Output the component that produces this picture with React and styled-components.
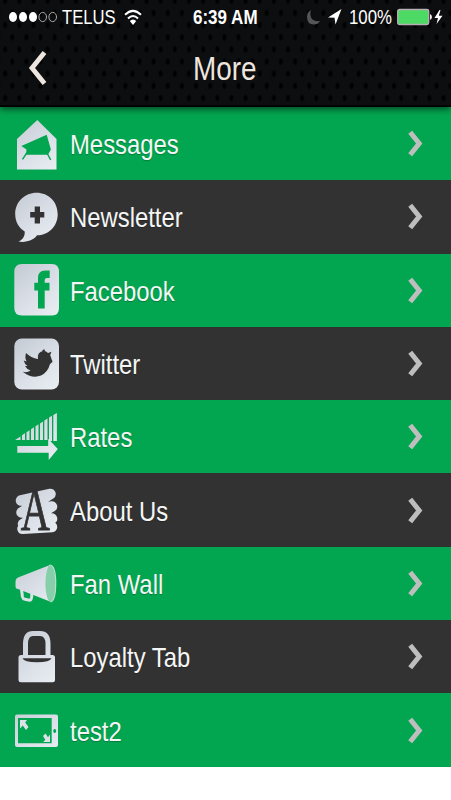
import styled, { createGlobalStyle } from 'styled-components';

const GlobalStyle = createGlobalStyle`
    * {
        box-sizing: border-box;
    }

    body {
        margin: 0;
        background: #fff;
        font-family: "Liberation Sans", Arial, sans-serif;
    }
`;

const Screen = styled.div`
    width: 451px;
    height: 800px;
    overflow: hidden;
    background: #fff;
`;

const Header = styled.header`
    position: relative;
    height: 107px;
    border-bottom: 2px solid #020202;
    box-shadow: 0 2px 7px rgba(0, 0, 0, 0.6);
    background-color: #0d0e0f;
    background-image: radial-gradient(
            ellipse 2.7px 4.2px at 50% 50%,
            #010101 45%,
            transparent
        ),
        radial-gradient(ellipse 2.7px 4.2px at 50% 50%, #010101 45%, transparent);
    background-size: 14.15px 24.3px;
    background-position: 5.2px 0.8px, -1.9px 12.95px;
`;

const StatusBar = styled.div`
    display: grid;
    grid-template-columns: 1fr auto 1fr;
    align-items: center;
    height: 34px;
    padding: 0 8px 0 9px;
    color: #fff;
`;

const Side = styled.div`
    display: flex;
    align-items: center;
    justify-content: ${(props) => (props.$end ? 'flex-end' : 'flex-start')};
`;

const Squeezed = styled.span`
    display: block;
    width: ${(props) => props.$width}px;
    margin-left: ${(props) => props.$gap || 0}px;
    font-size: ${(props) => props.$size}px;
    font-weight: ${(props) => (props.$bold ? 700 : 400)};
    line-height: 1.2;
    white-space: nowrap;
    transform: scaleX(${(props) => props.$scale});
    transform-origin: left center;
`;

const Glyph = styled.svg`
    display: block;
    flex: none;
    margin-left: ${(props) => props.$gap || 0}px;
`;

const NavBar = styled.div`
    display: grid;
    grid-template-columns: 193px auto 1fr;
    align-items: center;
    height: 68px;
    color: #eee5df;
`;

const BackButton = styled.button`
    width: 60px;
    padding: 0 0 0 27px;
    border: none;
    background: none;
`;

const List = styled.ul`
    margin: 0;
    padding: 0;
    list-style: none;
`;

const Row = styled.li`
    display: flex;
    align-items: center;
    height: 73.3px;
    padding: 0 28px 0 12px;
    color: #f4f6f5;
    background: ${(props) => (props.$green ? '#03a650' : '#333233')};
`;

const IconBox = styled.svg`
    display: block;
    flex: none;
    width: 50px;
    height: 60px;
    overflow: visible;
`;

const Label = styled.span`
    flex: 1;
    margin-left: 8.3px;
    padding-top: 3px;
    font-size: 28px;
    line-height: 34px;
    white-space: nowrap;
    text-shadow: 0 1px 1px rgba(0, 0, 0, 0.25);
    transform: scaleX(0.852);
    transform-origin: left center;
`;

const SILVER = 'url(#silver)';

const Messages = () => (
    <>
        <path fill={SILVER} d="M25.3 6 L44.5 25 V55.5 H5 V25 Z" />
        <path
            fill="#03a650"
            d="M9.3 32 L34.7 20.7 L38.9 35.5 L36 40.7 H14 L14.5 35.5 Z"
        />
        <path
            fill="none"
            stroke="#03a650"
            strokeWidth="1.4"
            d="M15 38.5 L10.5 45.3 M35 39 L38.7 45.8"
        />
    </>
);

const Newsletter = () => (
    <path
        fill={SILVER}
        fillRule="evenodd"
        d="M24.5 5.7 C36.5 5.7 45.7 14.5 45.7 27 C45.7 40 36 48.3 25 48.3 C22 53 14 56 6.5 54.5 C11 52.5 13 49 12.7 44.5 C7 41 3.2 35 3.2 27 C3.2 14.5 13 5.7 24.5 5.7 Z M22.7 19.5 V25 H18.2 V30.5 H22.7 V36.5 H28 V30.5 H32.3 V25 H28 V19.5 Z"
    />
);

const Facebook = () => (
    <path
        fill={SILVER}
        fillRule="evenodd"
        d="M10 4 H40 Q47 4 47 12 V48 Q47 55.5 40 55.5 H10 Q2.3 55.5 2.3 48 V12 Q2.3 4 10 4 Z M37.7 10.5 H33 Q26 10.5 26 18 V22.7 H22.3 V30.5 H26 V48.5 H32.7 V30.5 H37.5 V22.7 H32.7 V20 Q32.7 18 35 18 H37.7 Z"
    />
);

const Twitter = () => (
    <>
        <rect x="2.3" y="4.5" width="44.7" height="51" rx="7.5" fill={SILVER} />
        <path
            fill="#333233"
            d="M14 19 Q19 24 26 25 Q25 18 31 17 Q34 16.5 36 19 L39.5 17.7 L38.2 21 L40.5 28 Q38.5 29 37.8 30.5 Q36 38 29 41.5 Q20 45 10.7 37.7 Q15 39 18.5 36.5 Q14.5 35 13 32 H15.5 Q12.5 30 11.7 26.5 L14.7 27.5 Q12.5 24 14 19 Z M30 17 Q33 13 33 18 Z M37 25 L40.5 26 L37.5 29 Z"
        />
    </>
);

const Rates = () => (
    <g fill={SILVER}>
        <path d="M3 33 L8.5 29.5 V33 Z M10 28.3 L13 26 V33 H10 Z M14.5 25.3 L17.5 23.3 V33 H14.5 Z M19 22.3 L22 20.3 V33 H19 Z M23.5 19.3 L26.5 17.3 V33 H23.5 Z M28 16.5 L31 14.5 V33 H28 Z M32.3 13.5 L35.5 11.5 V33 H32.3 Z M37 10.5 L40 8.7 V34 H37 Z M41.3 8 L44.9 6 V34 H41.3 Z" />
        <path d="M5.3 39 H36.2 V31.8 L45.8 42 L36.7 53 V45.7 H5.3 Z" />
    </g>
);

const AboutUs = () => (
    <>
        <path
            fill="none"
            stroke={SILVER}
            strokeWidth="10.5"
            strokeLinecap="round"
            strokeLinejoin="round"
            d="M9 20.5 L38.5 14 L9.5 32.5 L40 26.5 L11 44 L40 38.5 L10.5 48.8 L40 47"
        />
        <text
            x="0"
            y="49.5"
            fill="#333233"
            stroke="#333233"
            strokeWidth="0.9"
            fontFamily="Liberation Serif"
            fontSize="61"
            textAnchor="middle"
            transform="translate(23.3 0) scale(.66 1)"
        >
            A
        </text>
    </>
);

const FanWall = () => (
    <>
        <path
            fill={SILVER}
            d="M38 12 L6 24.5 Q3.5 25.5 3.5 29 V33 Q3.5 36 6 36 L38 48.5 Z"
        />
        <ellipse cx="38.7" cy="30.5" rx="5.3" ry="18.5" fill="#86cfaa" />
        <path
            fill="none"
            stroke="#b9dfcb"
            strokeWidth="1.2"
            d="M37.5 12 Q43.7 12 43.7 30 Q43.7 48 38.5 49"
        />
        <path
            fill="none"
            stroke="#dce2e8"
            strokeWidth="3"
            d="M9.5 36.5 L10.5 44 Q11 46 13 46.3 L17.5 47.3 Q20 47 19.8 41"
        />
    </>
);

const Loyalty = () => (
    <>
        <path
            fill="none"
            stroke={SILVER}
            strokeWidth="5"
            d="M13.5 29 V17 Q13.5 6.5 21 6.5 H28 Q36 6.5 36 17 V29"
        />
        <rect x="6.5" y="28" width="36.5" height="27.3" rx="2.5" fill={SILVER} />
        <path
            fill="#333233"
            d="M10.5 31.3 H39.5 Q38 35.3 25 35.3 Q12 35.3 10.5 31.3 Z"
        />
    </>
);

const Tablet = () => (
    <>
        <path
            fill={SILVER}
            fillRule="evenodd"
            d="M5 14.5 H44 Q46 14.5 46 16.5 V45 Q46 47 44 47 H5 Q3 47 3 45 V16.5 Q3 14.5 5 14.5 Z M6 18 V43.3 H39.7 V18 Z M42.7 29 A1.5 2 0 1 0 42.71 29 Z"
        />
        <path
            fill="#dce2e8"
            d="M8 20 H15 L13.2 22.6 L16.5 27 L14 30 L10.8 25.6 L8 28.5 Z M38 42 H31.2 L33.3 39.7 L31 36 L33.5 33.5 L36 37.2 L38 34.5 Z"
        />
    </>
);

const Chevron = () => (
    <Glyph width="15" height="27" viewBox="0 0 15 27">
        <path
            d="M2.2 2.2 L11.2 13.5 L2.2 24.8"
            fill="none"
            stroke="#bebebe"
            strokeWidth="5"
        />
    </Glyph>
);

const items = [
    { label: 'Messages', Icon: Messages },
    { label: 'Newsletter', Icon: Newsletter },
    { label: 'Facebook', Icon: Facebook },
    { label: 'Twitter', Icon: Twitter },
    { label: 'Rates', Icon: Rates },
    { label: 'About Us', Icon: AboutUs },
    { label: 'Fan Wall', Icon: FanWall },
    { label: 'Loyalty Tab', Icon: Loyalty },
    { label: 'test2', Icon: Tablet },
];

const App = () => {
    return (
        <Screen>
            <GlobalStyle />
            <Header>
                <StatusBar>
                    <Side>
                        <Glyph width="49" height="12" viewBox="0 0 49 12">
                            <g fill="#fff">
                                <ellipse cx="4" cy="6" rx="4" ry="5" />
                                <ellipse cx="14" cy="6" rx="4" ry="5" />
                                <ellipse cx="24" cy="6" rx="4" ry="5" />
                            </g>
                            <g fill="none" stroke="#aaa">
                                <ellipse cx="33.7" cy="6" rx="3.8" ry="4.6" />
                                <ellipse cx="43.7" cy="6" rx="3.8" ry="4.6" />
                            </g>
                        </Glyph>
                        <Squeezed $size={20} $scale={0.83} $width={54} $gap={4}>
                            TELUS
                        </Squeezed>
                        <Glyph width="18" height="17" viewBox="0 0 18 17" $gap={8}>
                            <g fill="none" stroke="#fff" strokeWidth="2">
                                <path d="M1 5.8 Q9 -2 17 5.8" />
                                <path d="M4 9.5 Q9 4.5 14 9.5" />
                            </g>
                            <path
                                d="M5.8 12 Q9 9 12.2 12 L9 16 Z"
                                fill="#fff"
                            />
                        </Glyph>
                    </Side>
                    <Squeezed $size={20} $scale={0.85} $width={66} $bold>
                        6:39 AM
                    </Squeezed>
                    <Side $end>
                        <Glyph width="15" height="17" viewBox="0 0 15 17">
                            <path
                                d="M5 1 Q1 3 1 8 Q1 15.5 8 15.5 Q12 15.5 14 12 Q5 13 4.5 6 Q4.3 3 5 1 Z"
                                fill="#555"
                            />
                        </Glyph>
                        <Glyph width="14" height="16" viewBox="0 0 14 16" $gap={7}>
                            <path d="M0 8.5 L13.5 0 L7.5 15.5 L6.5 8.8 Z" fill="#fff" />
                        </Glyph>
                        <Squeezed $size={20} $scale={0.84} $width={43} $gap={7}>
                            100%
                        </Squeezed>
                        <Glyph width="46" height="18" viewBox="0 0 46 18" $gap={5}>
                            <rect
                                x="0.7"
                                y="1.5"
                                width="31"
                                height="15"
                                rx="1.8"
                                fill="#4cd964"
                                stroke="#b9aeb5"
                                strokeWidth="1.3"
                            />
                            <path d="M33 6 Q35 7 35 9 Q35 11 33 12 Z" fill="#eee" />
                            <path
                                d="M42.5 2 L37.5 10 H41 L39.5 16 L45.5 7.8 H41.8 L43.5 2 Z"
                                fill="#fff"
                            />
                        </Glyph>
                    </Side>
                </StatusBar>
                <NavBar>
                    <BackButton>
                        <Glyph width="20" height="34" viewBox="0 0 20 34">
                            <path
                                d="M17.5 1.5 L5 17 L17.5 32.5"
                                fill="none"
                                stroke="#eee5df"
                                strokeWidth="4.8"
                            />
                        </Glyph>
                    </BackButton>
                    <Squeezed $size={34} $scale={0.82} $width={66}>
                        More
                    </Squeezed>
                </NavBar>
            </Header>
            <svg width="0" height="0" style={{ display: 'block' }}>
                <defs>
                    <linearGradient
                        id="silver"
                        gradientUnits="userSpaceOnUse"
                        x1="2"
                        y1="4"
                        x2="45"
                        y2="55"
                    >
                        <stop offset="0" stopColor="#c3c9d2" />
                        <stop offset="0.6" stopColor="#dce1e9" />
                        <stop offset="1" stopColor="#e9eef2" />
                    </linearGradient>
                </defs>
            </svg>
            <List>
                {items.map(({ label, Icon }, i) => (
                    <Row key={label} $green={i % 2 === 0}>
                        <IconBox viewBox="0 0 50 60">
                            <Icon />
                        </IconBox>
                        <Label>{label}</Label>
                        <Chevron />
                    </Row>
                ))}
            </List>
        </Screen>
    );
};

export default App;
